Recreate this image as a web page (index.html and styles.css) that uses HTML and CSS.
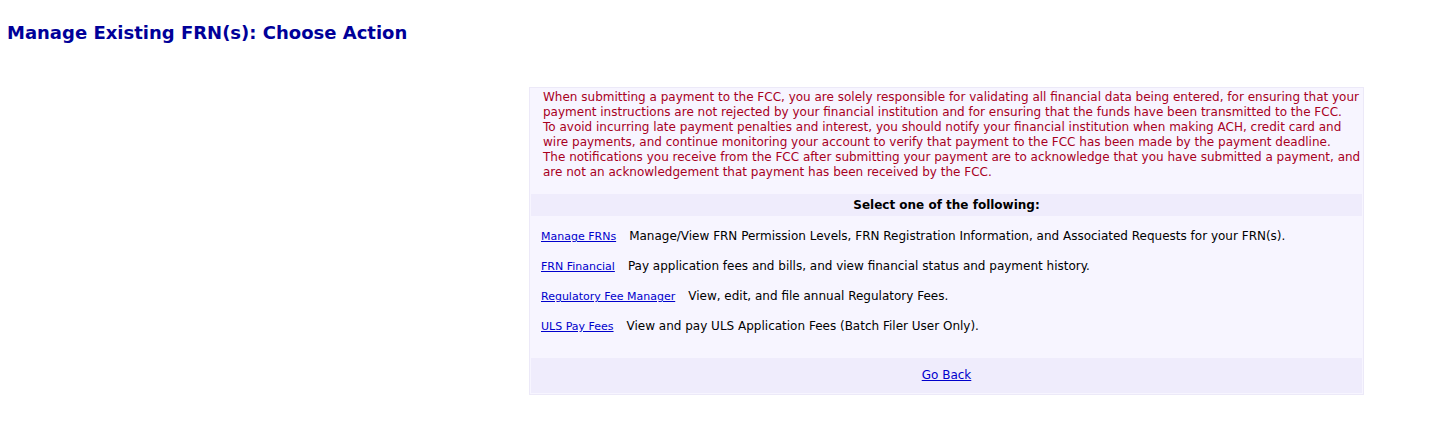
FILE: index.html
```html
<!DOCTYPE html>
<html lang="en">
<head>
    <meta charset="UTF-8">
    <title>Manage Existing FRN(s): Choose Action</title>
    <link rel="stylesheet" href="styles.css">
</head>
<body>

<h1 class="page-title">Manage Existing FRN(s): Choose Action</h1>

<div class="layout">
    <div class="side"></div>

    <div class="action-box">
        <div class="warning">
            When submitting a payment to the FCC, you are solely responsible for validating all financial data being entered, for ensuring that your<br>
            payment instructions are not rejected by your financial institution and for ensuring that the funds have been transmitted to the FCC.<br>
            To avoid incurring late payment penalties and interest, you should notify your financial institution when making ACH, credit card and<br>
            wire payments, and continue monitoring your account to verify that payment to the FCC has been made by the payment deadline.<br>
            The notifications you receive from the FCC after submitting your payment are to acknowledge that you have submitted a payment, and<br>
            are not an acknowledgement that payment has been received by the FCC.
        </div>

        <div class="box-header">Select one of the following:</div>

        <ul class="actions">
            <li><a href="#">Manage FRNs</a><span>Manage/View FRN Permission Levels, FRN Registration Information, and Associated Requests for your FRN(s).</span></li>
            <li><a href="#">FRN Financial</a><span>Pay application fees and bills, and view financial status and payment history.</span></li>
            <li><a href="#">Regulatory Fee Manager</a><span>View, edit, and file annual Regulatory Fees.</span></li>
            <li><a href="#">ULS Pay Fees</a><span>View and pay ULS Application Fees (Batch Filer User Only).</span></li>
        </ul>

        <div class="box-footer"><a href="#">Go Back</a></div>
    </div>
</div>

</body>
</html>
```

FILE: styles.css
```css
body {
    font-family: Verdana, "DejaVu Sans", sans-serif;
    margin: 0;
    padding: 0;
    background: #ffffff;
    color: #000000;
}

.page-title {
    margin: 0;
    padding: 22px 7px 0;
    font-size: 18px;
    line-height: 21px;
    color: #000099;
}

.layout {
    display: flex;
    margin-top: 44px;
}

.side {
    width: 529px;
    flex-shrink: 0;
}

.action-box {
    width: 831px;
    border: 1px solid #ece9f8;
    background: #f7f5ff;
    padding: 1px;
    font-size: 12px;
    line-height: 15px;
}

.warning {
    padding: 1px 0 14px 12px;
    color: #a8001e;
}

.box-header {
    background: #efecfc;
    text-align: center;
    font-weight: bold;
    padding: 4px 0 3px;
}

.actions {
    list-style: none;
    margin: 0;
    padding: 13px 10px 24px;
}

.actions li {
    line-height: 15px;
    margin-bottom: 15px;
}

.actions li:last-child {
    margin-bottom: 0;
}

.actions a {
    font-size: 11px;
    margin-right: 13px;
}

a {
    color: #0000cc;
}

.box-footer {
    background: #efecfc;
    text-align: center;
    padding: 10px 0;
}
```
